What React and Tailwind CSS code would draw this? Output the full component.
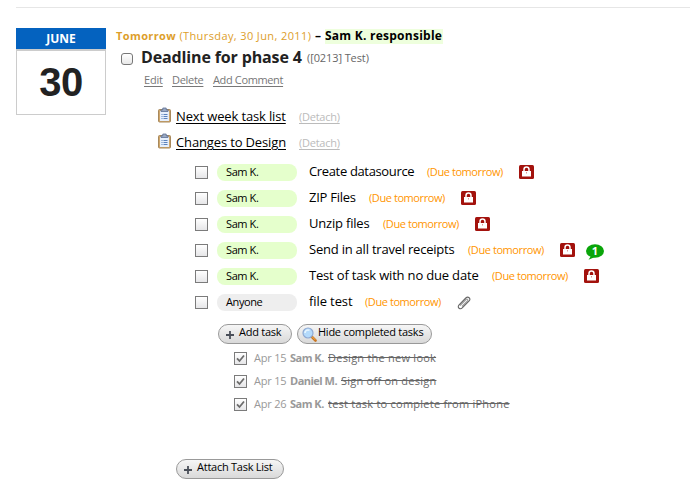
import React from "react";

const tasks = [
  { who: "Sam K.", title: "Create datasource", titleW: "w-[118px] tracking-[-0.35px]", lock: true },
  { who: "Sam K.", title: "ZIP Files", titleW: "w-[60px] tracking-[-0.25px]", lock: true },
  { who: "Sam K.", title: "Unzip files", titleW: "w-[74px] tracking-[-0.2px]", lock: true },
  { who: "Sam K.", title: "Send in all travel receipts", titleW: "w-[159px] tracking-[-0.22px]", lock: true, comments: 1 },
  { who: "Sam K.", title: "Test of task with no due date", titleW: "w-[183px] tracking-[-0.18px]", lock: true },
  { who: "Anyone", title: "file test", titleW: "w-[56px] tracking-[-0.1px]", file: true },
];

const completed = [
  { date: "Apr 15", who: "Sam K.", whoW: "w-[38px]", title: "Design the new look" },
  { date: "Apr 15", who: "Daniel M.", whoW: "w-[51px]", title: "Sign off on design" },
  { date: "Apr 26", who: "Sam K.", whoW: "w-[38px]", title: "test task to complete from iPhone" },
];

function ClipboardIcon() {
  return (
    <svg width="13" height="16" viewBox="0 0 13 16" className="shrink-0">
      <rect x="0.5" y="2.5" width="12" height="12.500" rx="1" fill="#cfa76c" stroke="#a8895c" />
      <rect x="2" y="4" width="9" height="10" fill="#e6effc" />
      <path d="M3 4.500V2.800h1.800V1h3.400v1.800H10v1.700z" fill="#9aaac4" stroke="#5d7094" strokeWidth="0.8" />
      <path d="M3.500 7.500h1M5.500 7.500h4M3.500 9.500h1M5.500 9.500h4M3.500 11.500h1M5.500 11.500h4" stroke="#5b82bd" strokeWidth="1" />
    </svg>
  );
}

function LockIcon() {
  return (
    <svg width="15" height="14" viewBox="0 0 15 14" className="shrink-0">
      <rect width="15" height="14" rx="1.5" fill="#a3120d" />
      <path d="M5 7V4.600a2.500 2.500 0 0 1 5 0V7" fill="none" stroke="#fff" strokeWidth="1.500" />
      <path d="M3 6h9v5.500H3z" fill="#fff" />
      <path d="M7 7h1v1.500H7z" fill="#d99" />
    </svg>
  );
}

function CommentBadge({ count }) {
  return (
    <span className="relative ml-[11px] mt-[4px] block h-[16px] w-[18px] shrink-0">
      <svg width="18" height="16" viewBox="0 0 18 16" className="block">
        <ellipse cx="9" cy="7" rx="9" ry="6.700" fill="#0aa50a" />
        <path d="M5 12L2.500 15.800L9 13z" fill="#0aa50a" />
      </svg>
      <span className="absolute inset-x-0 top-0 text-center text-[11px] leading-[13px] font-bold text-white">{count}</span>
    </span>
  );
}

function PaperclipIcon() {
  return (
    <svg width="14" height="14" viewBox="0 0 14 14" className="mt-[2px] shrink-0">
      <path d="M3 9.500L9 3.500c1.200-1.200 2.600.2 1.500 1.400L5 10.500" fill="none" stroke="#999" strokeWidth="1.100" />
      <path d="M4 6.800L8.800 2c2.400-2.200 5.400.6 3.300 3L5.500 11.700c-2.400 2.400-5.600-.2-3.600-2.500L4 6.800" fill="none" stroke="#666" strokeWidth="1.100" />
    </svg>
  );
}

function PlusIcon() {
  return (
    <svg width="8" height="8" viewBox="0 0 8 8" className="mt-[2px] shrink-0">
      <path d="M4 0v8M0 4h8" stroke="#4a4f59" strokeWidth="1.800" />
    </svg>
  );
}

function MagnifierIcon() {
  return (
    <svg width="15" height="15" viewBox="0 0 15 15" className="shrink-0">
      <path d="M9.500 9.500l4 4" stroke="#ca7621" strokeWidth="2.600" strokeLinecap="round" />
      <path d="M9.800 9.400l3.400 3.400" stroke="#f4b252" strokeWidth="1" />
      <circle cx="6" cy="6" r="5" fill="#b4dafb" stroke="#8fa9d2" strokeWidth="1.200" />
      <path d="M3 6a3 3 0 0 1 4.500-2.600" fill="none" stroke="#e8f6ff" strokeWidth="1.600" />
    </svg>
  );
}

function CheckBox({ checked }) {
  return (
    <span className="flex h-[13px] w-[13px] shrink-0 items-center justify-center border border-[#7b7b7b] bg-linear-to-b from-white to-[#e6e6e8]">
      {checked && (
        <svg width="9" height="9" viewBox="0 0 9 9">
          <path d="M1 4.300L3.500 7L8 1.500" fill="none" stroke="#6c6c6c" strokeWidth="1.800" />
        </svg>
      )}
    </span>
  );
}

function PillButton({ className, children }) {
  return (
    <button className={"flex h-5 shrink-0 items-center rounded-full border border-[#999] bg-linear-to-b from-[#f6f6f6] to-[#d9d9d9] text-[11px] leading-[16px] tracking-[-0.25px] whitespace-nowrap text-black " + className}>
      {children}
    </button>
  );
}

export default function App() {
  return (
    <main className="h-[495px] w-[690px] overflow-hidden bg-white pt-[7px] pl-4 font-['Open_Sans','Noto_Sans',sans-serif] text-[#222]">
      <div className="h-px bg-[#e6e6e6]" />
      <div className="flex pt-5">
        <div className="h-[87px] w-[90px] shrink-0">
          <div className="h-[21px] bg-[#0462bf] text-center text-[12px] leading-[21px] font-bold text-white">JUNE</div>
          <div className="h-[66px] border border-t-2 border-[#ccc] text-center font-['Liberation_Sans',sans-serif] text-[40px] leading-[63px] font-bold tracking-[-0.5px]">30</div>
        </div>

        <div className="ml-[10px] flex-1 whitespace-nowrap">
          <div className="flex h-4 items-center text-[11px] text-[#dd9e2b]">
            <div className="w-[199px] tracking-[0.39px]"><b>Tomorrow</b> (Thursday, 30 Jun, 2011)</div>
            <b className="w-[10px] text-[12px] text-black">–</b>
            <b className="h-[15px] w-[118px] bg-[#eeffdd] text-[12px] leading-[14px] tracking-[0.25px] text-black">Sam K. responsible</b>
          </div>
          <div className="flex h-[26px] items-center pl-[5px]">
            <span className="mt-[3px] h-3 w-3 rounded-[3px] border border-[#777] bg-linear-to-b from-white to-[#e8e8e8]" />
            <h1 className="mt-[-1px] ml-2 w-[166px] text-[16px] leading-5 font-bold tracking-[-0.14px]">Deadline for phase 4</h1>
            <span className="mt-[2px] text-[11px] tracking-[-0.1px] text-[#666]">([0213] Test)</span>
          </div>
          <div className="flex h-5 items-center pl-7 text-[11px] text-[#777] underline underline-offset-2">
            <span className="w-7"><span className="tracking-[-0.2px]">Edit</span></span>
            <span className="w-[41px]"><span className="tracking-[-0.3px]">Delete</span></span>
            <span className="tracking-[-0.36px]">Add Comment</span>
          </div>

          <div className="mt-[13px] pl-[42px]">
            {["Next week task list", "Changes to Design"].map((name) => (
              <div key={name} className="flex h-[26px] items-center">
                <span className="mt-[-3px] w-[18px]"><ClipboardIcon /></span>
                <span className="mt-[2px] w-[123px] text-[13px] tracking-[-0.14px] text-black underline underline-offset-2">{name}</span>
                <span className="mt-[2px] text-[11px] tracking-[-0.25px] text-[#bbb] underline underline-offset-2">(Detach)</span>
              </div>
            ))}
          </div>

          <div className="mt-1 pl-[79px]">
            {tasks.map((t) => (
              <div key={t.title} className="flex h-[26px] items-center">
                <CheckBox />
                <span className={"ml-[9px] h-[17px] w-[80px] rounded-[8px] pl-[9px] text-[11px] leading-[16px] tracking-[-0.4px] text-black " + (t.who === "Anyone" ? "bg-[#eeeeee]" : "bg-[#e5ffcc]")}>{t.who}</span>
                <span className={"ml-3 text-[13px] text-black " + t.titleW}>{t.title}</span>
                <span className="w-[92px] text-[11px] tracking-[-0.42px] text-[#ff9500]">(Due tomorrow)</span>
                {t.lock && <LockIcon />}
                {t.comments && <CommentBadge count={t.comments} />}
                {t.file && <PaperclipIcon />}
              </div>
            ))}
          </div>

          <div className="mt-[9px] flex gap-[5px] pl-[102px]">
            <PillButton className="w-[74px] gap-[5px] pl-[7px]"><PlusIcon /><span className="mt-[-4px]">Add task</span></PillButton>
            <PillButton className="w-[135px] gap-[1px] pl-1"><MagnifierIcon /><span className="mt-[-4px]">Hide completed tasks</span></PillButton>
          </div>

          <div className="mt-[3px] pl-[118px] text-[11px] text-[#999]">
            {completed.map((c) => (
              <div key={c.title} className="flex h-[23px] items-center">
                <CheckBox checked />
                <span className="ml-[7px] w-[36px] tracking-[-0.2px]">{c.date}</span>
                <b className={"tracking-[-0.5px] " + c.whoW}>{c.who}</b>
                <span className="tracking-[0.24px] text-[#666] line-through">{c.title}</span>
              </div>
            ))}
          </div>

          <div className="mt-[43px] pl-[60px]">
            <PillButton className="w-[108px] gap-[5px] pl-[7px]"><PlusIcon /><span className="mt-[-4px]">Attach Task List</span></PillButton>
          </div>
        </div>
      </div>
    </main>
  );
}
